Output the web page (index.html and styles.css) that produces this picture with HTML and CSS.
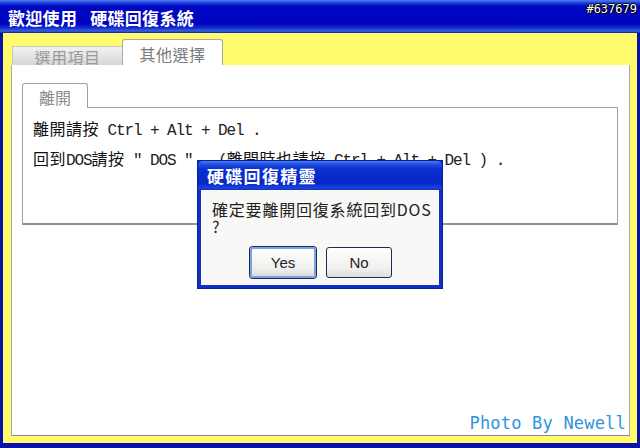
FILE: index.html
```html
<!DOCTYPE html>
<html lang="zh-Hant">
<head>
<meta charset="utf-8">
<title>硬碟回復系統</title>
<link rel="stylesheet" href="styles.css">
</head>
<body>
<div class="window">
  <div class="titlebar"><span class="title-text">歡迎使用</span><span class="title-text title-gap">硬碟回復系統</span></div>
  <div class="frame">
    <div class="tabs">
      <div class="tab tab-inactive">選用項目</div>
      <div class="tab tab-active">其他選擇</div>
    </div>
    <div class="panel">
      <div class="group-tab">離開</div>
      <div class="group-box">
        <p class="line">離開請按<span class="mono"> Ctrl + Alt + Del .</span></p>
        <p class="line">回到<span class="mono">DOS</span>請按<span class="mono"> " DOS "   (</span>離開時也請按<span class="mono"> Ctrl + Alt + Del ) .</span></p>
      </div>
    </div>
  </div>

  <div class="dialog">
    <div class="dialog-title">硬碟回復精靈</div>
    <div class="dialog-body">
      <p class="dialog-msg">確定要離開回復系統回到DOS<br>?</p>
      <div class="buttons">
        <button class="btn btn-focus">Yes</button>
        <button class="btn">No</button>
      </div>
    </div>
  </div>

  <div class="stamp">#637679</div>
  <div class="credit">Photo By Newell</div>
</div>
</body>
</html>
```

FILE: styles.css
```css
* { box-sizing: border-box; }
html, body { margin: 0; padding: 0; }
body {
  width: 640px;
  height: 448px;
  overflow: hidden;
  font-family: "Noto Sans CJK TC", "Noto Sans", sans-serif;
}
.window {
  position: relative;
  width: 640px;
  height: 448px;
  display: flex;
  flex-direction: column;
  background: #0a12a8;
}
.titlebar {
  height: 33px;
  flex: none;
  background: linear-gradient(#4a7ef0 0px, #1d3fd8 3px, #0008c4 6px, #0004c0 24px, #1530d0 28px, #3a62e0 31px, #0a1aa0 33px);
  display: flex;
  align-items: center;
  padding-left: 8px;
}
.title-text {
  color: #fff;
  font-size: 17px;
  font-weight: bold;
  letter-spacing: 0.3px;
  margin-top: 1px;
}
.title-gap {
  margin-left: 13px;
}
.frame {
  flex: 1;
  display: flex;
  flex-direction: column;
  margin: 0 3px 5px 3px;
  background: #fffb6c;
  padding: 0 7px 7px 8px;
}
.tabs {
  height: 32px;
  flex: none;
  display: flex;
  align-items: flex-end;
}
.tab {
  font-size: 16px;
  color: #8a8a8a;
  display: flex;
  align-items: center;
  justify-content: center;
  letter-spacing: 0.5px;
}
.tab-inactive {
  width: 110px;
  height: 19px;
  margin-left: 1px;
  background: linear-gradient(#f2f2f2, #d6d6d6);
  border-top: 1px solid #c8c8c8;
  border-left: 1px solid #c8c8c8;
  color: #9a9a9a;
  padding-top: 1px;
}
.tab-active {
  width: 101px;
  height: 26px;
  background: #fff;
  border: 1px solid #a8a8a8;
  border-bottom: none;
  border-radius: 3px 3px 0 0;
  color: #7c7c7c;
  padding-top: 2px;
}
.panel {
  flex: 1;
  background: #fff;
  border: 1px solid #a8a8a8;
  border-top: none;
  border-bottom-color: #8a8a8a;
  padding: 18px 11px 0 10px;
  display: flex;
  flex-direction: column;
}
.group-tab {
  width: 66px;
  height: 25px;
  border: 1px solid #a0a0a0;
  border-bottom: none;
  border-radius: 3px 3px 0 0;
  font-size: 16px;
  color: #8c8c8c;
  display: flex;
  align-items: center;
  justify-content: center;
  padding-top: 1px;
  position: relative;
  z-index: 1;
  background: #fff;
  margin-bottom: -1px;
}
.group-box {
  height: 118px;
  border: 1px solid #a0a0a0;
  border-bottom: 2px solid #909090;
  padding: 5px 0 0 10px;
}
.line {
  margin: 0;
  height: 30px;
  line-height: 30px;
  font-size: 16px;
  color: #111;
  white-space: pre;
  letter-spacing: 0.5px;
}
.mono {
  font-family: "Liberation Mono", "DejaVu Sans Mono", monospace;
  font-size: 16px;
  letter-spacing: -1.1px;
  color: #222;
}
.dialog {
  position: absolute;
  left: 198px;
  top: 161px;
  width: 244px;
  height: 127px;
  background: #1a3cd0;
  border: 3px solid #1030c0;
  border-top: none;
  display: flex;
  flex-direction: column;
  box-shadow: 0 0 0 1px #0a20a0;
}
.dialog-title {
  height: 29px;
  flex: none;
  background: linear-gradient(#4c80f0 0px, #2250e0 3px, #0a30d0 8px, #0626c8 22px, #1a44d8 27px, #1030c0 29px);
  border-radius: 5px 5px 0 0;
  color: #fff;
  font-size: 17px;
  font-weight: bold;
  display: flex;
  align-items: center;
  letter-spacing: 1.3px;
  margin: 0 -3px;
  padding-left: 9px;
}
.dialog-body {
  flex: 1;
  background: #f8f8f6;
  padding: 11px 0 0 11px;
}
.dialog-msg {
  margin: 0;
  font-size: 16px;
  line-height: 17px;
  color: #222;
  letter-spacing: 0.8px;
}
.buttons {
  display: flex;
  gap: 10px;
  margin-top: 12px;
  margin-left: 38px;
}
.btn {
  width: 66px;
  height: 31px;
  font-family: "Liberation Sans", "DejaVu Sans", sans-serif;
  font-size: 15px;
  color: #222;
  background: linear-gradient(#ffffff, #f0f0ee 70%, #dcdcd8);
  border: 1px solid #1c2a5c;
  border-radius: 3px;
  padding: 0;
}
.btn-focus {
  border: 2px solid #7aa2e0;
  box-shadow: 0 0 0 1px #1c2a5c;
}
.stamp {
  position: absolute;
  right: 3px;
  top: 2px;
  font-family: "DejaVu Sans Mono", "Liberation Mono", monospace;
  font-size: 12px;
  color: #fff;
  text-shadow: 1px 1px 0 #000, -1px 0 0 #000, 0 -1px 0 #000, 1px 0 0 #000;
}
.credit {
  position: absolute;
  right: 14px;
  bottom: 15px;
  font-family: "DejaVu Sans Mono", "Liberation Mono", monospace;
  font-size: 17px;
  color: #2e94dc;
  letter-spacing: 0.2px;
}
```
